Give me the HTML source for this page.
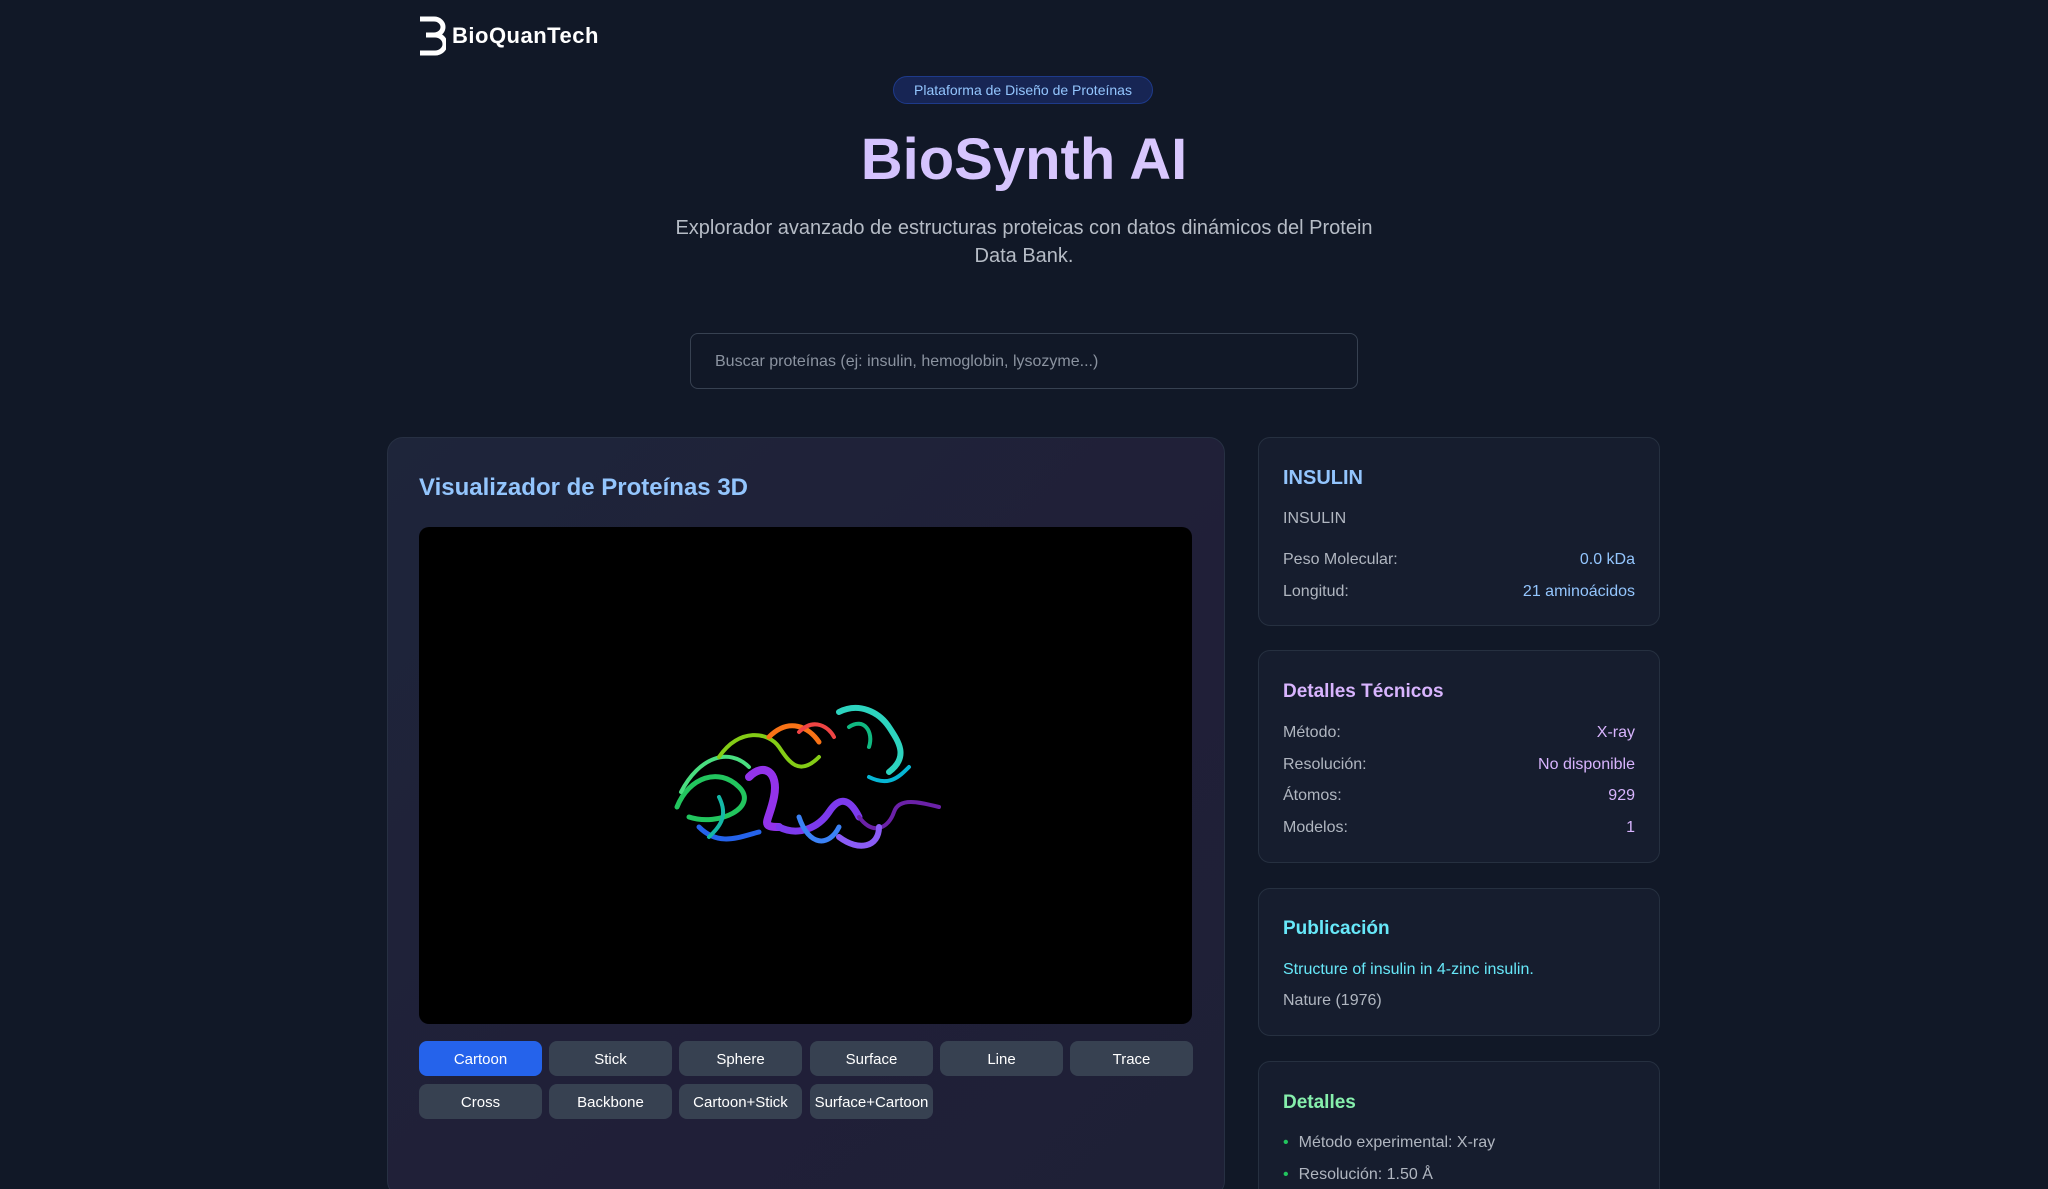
<!DOCTYPE html>
<html><head><meta charset="utf-8"><style>
*{box-sizing:border-box;margin:0;padding:0}
html,body{width:2048px;height:1189px;overflow:hidden}
body{background:#111827;font-family:"Liberation Sans",sans-serif;color:#e5e7eb;position:relative}
.abs{position:absolute}
.logo{left:418px;top:16px;display:flex;align-items:center;gap:6px;color:#fff;font-weight:bold;font-size:22px;letter-spacing:.5px}
.badge{left:893px;top:76px;width:260px;height:28px;border-radius:14px;background:#172554;border:1px solid #1e3a8a;color:#93c5fd;font-size:14px;display:flex;align-items:center;justify-content:center}
.title{left:0;width:2048px;top:126px;text-align:center;font-size:58px;font-weight:bold;color:#d8b4fe;background:linear-gradient(90deg,#c4b5fd,#e9d5ff);-webkit-background-clip:text;-webkit-text-fill-color:transparent}
.sub{left:659px;width:730px;top:214px;text-align:center;font-size:20px;line-height:28px;color:#b6bcc6}
.search{left:690px;top:333px;width:668px;height:56px;border:1px solid #374151;border-radius:8px;background:#111827;color:#8b93a0;font-size:16px;padding-left:24px;padding-top:2px;display:flex;align-items:center}
.panel{left:387px;top:437px;width:838px;height:760px;border-radius:16px;border:1px solid #273043;background:linear-gradient(135deg,#1e253a,#201f38 60%,#1e2036)}
.ptitle{left:419px;top:474px;font-size:24px;font-weight:bold;color:#93c5fd}
.viewer{left:419px;top:527px;width:773px;height:497px;background:#000;border-radius:10px}
.btn{position:absolute;width:123px;height:35px;border-radius:8px;background:#374151;color:#fff;font-size:15px;display:flex;align-items:center;justify-content:center;padding-top:2px}
.btn.on{background:#2563eb}
.card{position:absolute;left:1258px;width:402px;border:1px solid #263040;border-radius:12px;background:#161d2e}
.ct{position:absolute;left:24px;font-size:20px;font-weight:bold}
.row{position:absolute;left:24px;right:24px;display:flex;justify-content:space-between;font-size:16px;color:#b0b6c0}
</style></head><body>
<div class="abs logo"><svg width="28" height="40" viewBox="0 0 28 40"><path d="M2 3H16A9 8 0 0 1 16 19H8M8 19H17A10 9 0 0 1 17 37H2" fill="none" stroke="#fff" stroke-width="5"/></svg><span>BioQuanTech</span></div>
<div class="abs badge">Plataforma de Diseño de Proteínas</div>
<div class="abs title">BioSynth AI</div>
<div class="abs sub">Explorador avanzado de estructuras proteicas con datos dinámicos del Protein Data Bank.</div>
<div class="abs search">Buscar proteínas (ej: insulin, hemoglobin, lysozyme...)</div>
<div class="abs panel"></div>
<div class="abs ptitle">Visualizador de Proteínas 3D</div>
<div class="abs viewer">
<svg width="773" height="497" viewBox="0 0 773 497">
<g fill="none" stroke-linecap="round" stroke-width="5">
<path d="M258 280C270 250 300 240 320 260S300 300 270 290" stroke="#22c55e"/>
<path d="M262 265C280 230 310 220 330 240" stroke="#4ade80" stroke-width="4"/>
<path d="M300 230C320 200 350 205 360 220S380 250 400 230" stroke="#84cc16" stroke-width="4"/>
<path d="M350 210C370 190 390 200 400 215" stroke="#f97316" stroke-width="5"/>
<path d="M380 205C395 190 410 200 415 210" stroke="#ef4444" stroke-width="4"/>
<path d="M420 185C440 175 460 185 470 200S490 230 470 245" stroke="#2dd4bf" stroke-width="6"/>
<path d="M430 200C445 190 455 205 450 220" stroke="#10b981" stroke-width="4"/>
<path d="M330 250C345 235 360 245 355 270S340 300 360 300" stroke="#9333ea" stroke-width="8"/>
<path d="M360 300C380 310 400 300 410 285S430 270 440 290" stroke="#7c3aed" stroke-width="7"/>
<path d="M440 290C455 310 470 300 475 285S500 275 520 280" stroke="#6b21a8" stroke-width="4"/>
<path d="M280 300C300 320 320 310 340 305" stroke="#2563eb" stroke-width="5"/>
<path d="M380 290C390 320 410 320 420 300" stroke="#3b82f6" stroke-width="5"/>
<path d="M420 310C440 325 460 320 460 300" stroke="#8b5cf6" stroke-width="6"/>
<path d="M450 250C470 260 480 250 490 240" stroke="#06b6d4" stroke-width="4"/>
<path d="M300 270C310 290 300 300 290 310" stroke="#14b8a6" stroke-width="4"/>
</g></svg></div>
<div class="btn on" style="left:419px;top:1041px">Cartoon</div>
<div class="btn" style="left:549px;top:1041px">Stick</div>
<div class="btn" style="left:679px;top:1041px">Sphere</div>
<div class="btn" style="left:810px;top:1041px">Surface</div>
<div class="btn" style="left:940px;top:1041px">Line</div>
<div class="btn" style="left:1070px;top:1041px">Trace</div>
<div class="btn" style="left:419px;top:1084px">Cross</div>
<div class="btn" style="left:549px;top:1084px">Backbone</div>
<div class="btn" style="left:679px;top:1084px">Cartoon+Stick</div>
<div class="btn" style="left:810px;top:1084px">Surface+Cartoon</div>

<div class="card" style="top:437px;height:189px">
<div class="ct" style="top:29px;color:#93c5fd">INSULIN</div>
<div class="row" style="top:72px">INSULIN</div>
<div class="row" style="top:113px"><span>Peso Molecular:</span><span style="color:#93c5fd">0.0 kDa</span></div>
<div class="row" style="top:145px"><span>Longitud:</span><span style="color:#93c5fd">21 aminoácidos</span></div>
</div>
<div class="card" style="top:650px;height:213px">
<div class="ct" style="top:30px;color:#d8b4fe;font-size:19px">Detalles Técnicos</div>
<div class="row" style="top:73px"><span>Método:</span><span style="color:#d8b4fe">X-ray</span></div>
<div class="row" style="top:105px"><span>Resolución:</span><span style="color:#d8b4fe">No disponible</span></div>
<div class="row" style="top:136px"><span>Átomos:</span><span style="color:#d8b4fe">929</span></div>
<div class="row" style="top:168px"><span>Modelos:</span><span style="color:#d8b4fe">1</span></div>
</div>
<div class="card" style="top:888px;height:148px">
<div class="ct" style="top:29px;color:#67e8f9;font-size:19px">Publicación</div>
<div class="row" style="top:72px;color:#67e8f9">Structure of insulin in 4-zinc insulin.</div>
<div class="row" style="top:103px">Nature (1976)</div>
</div>
<div class="card" style="top:1061px;height:140px">
<div class="ct" style="top:30px;color:#86efac;font-size:19px">Detalles</div>
<div class="row" style="top:72px;justify-content:flex-start"><span style="color:#22c55e;margin-right:10px">•</span>Método experimental: X-ray</div>
<div class="row" style="top:104px;justify-content:flex-start"><span style="color:#22c55e;margin-right:10px">•</span>Resolución: 1.50 Å</div>
</div>
</body></html>
